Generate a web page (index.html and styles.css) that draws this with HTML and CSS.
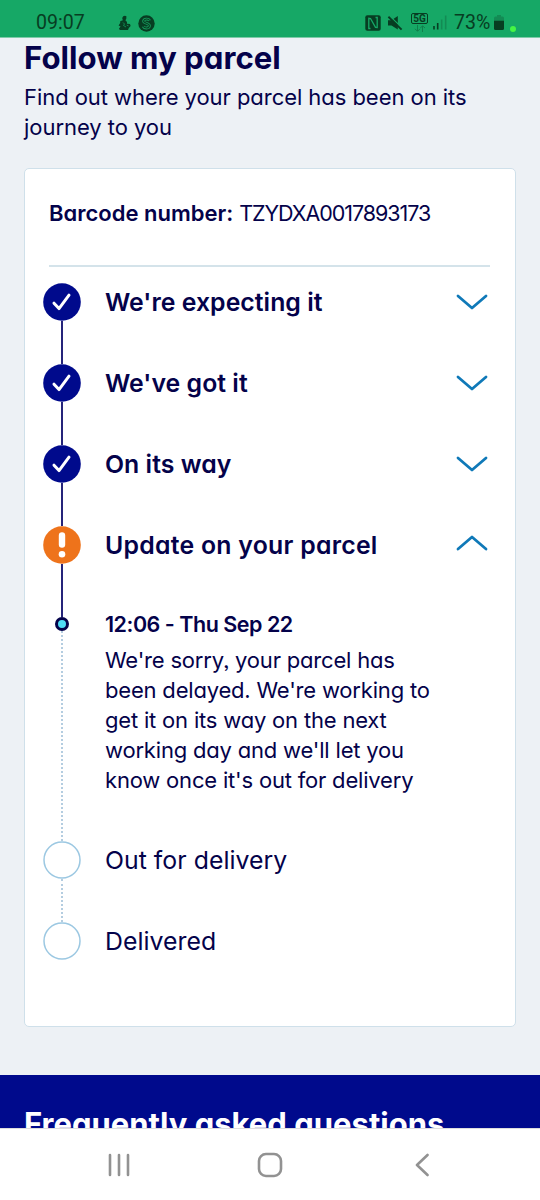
FILE: index.html
```
<!DOCTYPE html>
<html lang="en">
<head>
<meta charset="utf-8">
<title>Follow my parcel</title>
<link rel="stylesheet" href="styles.css">
</head>
<body>
<div class="phone">
  <header class="status">
    <div class="status-left">
      <span class="clock">09:07</span>
      <svg class="ico-app" width="13" height="16" viewBox="0 0 13 16"><path d="M5.2 1.2Q7 .2 8.400 1.300L8.300 3.800L7.400 5.200L9 7V8.800L12 9L12.600 11L10.800 13L10 15H1.800L1 13.400L2.600 11.500L.6 10.500L2.200 8L2.200 6.200L4.800 5.200L4.200 3Z" fill="currentColor"/><path d="M5 7.500L6.500 9L5.500 10.500L8 12M10.500 10.800L8.800 10.200" stroke="#16a866" stroke-width=".7" fill="none"/></svg>
      <svg class="ico-coin" width="17" height="17" viewBox="0 0 17 17"><circle cx="8.500" cy="8.500" r="8.200" fill="currentColor"/><path d="M11.700 5.600C10.500 3.400 6 3.500 5.600 6C5.300 8.600 11.700 8 11.400 10.900C11.100 13.700 6.300 13.600 5.200 11.300" fill="none" stroke="#169a5c" stroke-width="2.800"/><path d="M11.700 5.600C10.500 3.400 6 3.500 5.600 6C5.300 8.600 11.700 8 11.400 10.900C11.100 13.700 6.300 13.600 5.200 11.300" fill="none" stroke="currentColor" stroke-width="1.100"/></svg>
    </div>
    <div class="status-right">
      <svg class="ico-nfc" width="16" height="16" viewBox="0 0 16 16"><rect x=".3" y=".3" width="15.400" height="15.400" rx="2" fill="currentColor"/><path d="M5.500 13.500H3.800V3.300L5.500 3.500L10.500 12.300L12.200 12.500V2.500H10.500" fill="none" stroke="#16a866" stroke-width="1.300"/></svg>
      <svg class="ico-mute" width="16" height="16" viewBox="0 0 16 16"><path d="M1 5.300H4.500L10.800 1V14.500L4.500 10.500H1Z" fill="currentColor"/><path d="M2.300 .8L15.500 13.300" stroke="#16a866" stroke-width="1.300"/><path d="M1.400 1.800L14.600 14.600" stroke="currentColor" stroke-width="1.900"/></svg>
      <span class="network"><span class="five-g">5G</span>
        <svg width="12" height="7" viewBox="0 0 12 7"><path d="M3.500 0V6M1 3.800L3.500 6.300L6 3.800M8.500 7V1M6.400 3L8.500 .8L11 3" fill="none" stroke="#11804c" stroke-width="1"/></svg>
      </span>
      <svg class="ico-signal" width="14" height="15" viewBox="0 0 14 15"><path d="M1 11V14.500M4.700 8V14.500" stroke="currentColor" stroke-width="1.600"/><path d="M8.700 4.500V14.500M12.700 .5V14.500" stroke="#138b54" stroke-width="1.600"/></svg>
      <span class="percent">73%</span>
      <svg class="ico-battery" width="10" height="15" viewBox="0 0 10 15"><path d="M3 0H7V1.500H8.500Q10 1.500 10 3V6H0V3Q0 1.500 1.500 1.500H3Z" fill="#138b54"/><path d="M0 5.800H10V13.500Q10 15 8.500 15H1.500Q0 15 0 13.500Z" fill="currentColor"/></svg>
      <span class="live-dot"></span>
    </div>
  </header>

  <main class="page">
    <h1 class="title">Follow my parcel</h1>
    <p class="intro">Find out where your parcel has been on its<br>journey to you</p>

    <section class="card">
      <div class="barcode"><b class="barcode-name">Barcode number:</b><span class="barcode-value">TZYDXA0017893173</span></div>

      <div class="step">
        <div class="rail"><svg class="mark" viewBox="0 0 38 38"><circle cx="19" cy="19" r="18.800" fill="#000a8c"/><path d="M11 20.200L16 25.600L26 12.200" class="tick"/></svg><i class="line"></i></div>
        <h2 class="label">We're expecting it</h2>
        <svg class="chevron" viewBox="0 0 32 16"><path d="M2 2L16 14L30 2"/></svg>
      </div>
      <div class="step">
        <div class="rail"><svg class="mark" viewBox="0 0 38 38"><circle cx="19" cy="19" r="18.800" fill="#000a8c"/><path d="M11 20.200L16 25.600L26 12.200" class="tick"/></svg><i class="line"></i></div>
        <h2 class="label">We've got it</h2>
        <svg class="chevron" viewBox="0 0 32 16"><path d="M2 2L16 14L30 2"/></svg>
      </div>
      <div class="step">
        <div class="rail"><svg class="mark" viewBox="0 0 38 38"><circle cx="19" cy="19" r="18.800" fill="#000a8c"/><path d="M11 20.200L16 25.600L26 12.200" class="tick"/></svg><i class="line"></i></div>
        <h2 class="label">On its way</h2>
        <svg class="chevron" viewBox="0 0 32 16"><path d="M2 2L16 14L30 2"/></svg>
      </div>
      <div class="step step-open">
        <div class="rail"><svg class="mark" viewBox="0 0 38 38"><circle cx="19" cy="19" r="18.800" fill="#ee731b"/><path d="M19 9.500V18.500" stroke="#fff" stroke-width="6.400" stroke-linecap="round"/><circle cx="19" cy="28.200" r="3.300" fill="#fff"/></svg><i class="line line-short"></i><i class="dot"></i><i class="line line-dotted"></i></div>
        <div class="details">
          <h2 class="label label-open">Update on your parcel</h2>
          <h3 class="time">12:06 - Thu Sep 22</h3>
          <p class="message">We're sorry, your parcel has<br>been delayed. We're working to<br>get it on its way on the next<br>working day and we'll let you<br>know once it's out for delivery</p>
        </div>
        <svg class="chevron chevron-up" viewBox="0 0 32 16"><path d="M2 14L16 2L30 14"/></svg>
      </div>
      <div class="step">
        <div class="rail"><svg class="mark" viewBox="0 0 38 38"><circle cx="19" cy="19" r="18" class="ring"/></svg><i class="line line-dotted"></i></div>
        <h2 class="label pending">Out for delivery</h2>
      </div>
      <div class="step">
        <div class="rail"><svg class="mark" viewBox="0 0 38 38"><circle cx="19" cy="19" r="18" class="ring"/></svg></div>
        <h2 class="label pending">Delivered</h2>
      </div>
    </section>
  </main>

  <section class="faq"><h2 class="faq-title">Frequently asked questions</h2></section>

  <nav class="navbar">
    <svg width="22" height="24" viewBox="0 0 22 24"><path d="M2 2V22M11 2V22M20 2V22"/></svg>
    <svg class="home" width="26" height="26" viewBox="0 0 26 26"><rect x="2" y="2" width="22" height="22" rx="7"/></svg>
    <svg width="14" height="24" viewBox="0 0 14 24"><path d="M12.500 2L2 12L12.500 22"/></svg>
  </nav>
</div>
</body>
</html>
```
FILE: styles.css
```
* { box-sizing: border-box; margin: 0; padding: 0; }
body {
  background: #edf1f5;
  color: #04024a;
  font-family: Inter, "Liberation Sans", sans-serif;
  font-feature-settings: "cv11", "ss03";
}
.phone { width: 540px; height: 1200px; display: flex; flex-direction: column; overflow: hidden; }
svg { display: block; flex: none; }

.status {
  height: 38px; flex: none; background: #16a866; color: #073d22;
  border-bottom: 1px solid #7fcba9;
  display: flex; justify-content: space-between; padding: 0 36px 0 36px;
  font-family: Roboto, sans-serif; font-size: 19.600px; line-height: 24px;
}
.status-left, .status-right { display: flex; align-items: flex-start; padding-top: 11px; }
.clock { width: 82px; }
.ico-app { margin-top: 4px; }
.ico-coin { margin: 4px 0 0 7px; }
.status-right { position: relative; }
.ico-nfc { margin-top: 4px; }
.ico-mute { margin: 4px 0 0 6px; }
.network { margin: 2px 0 0 8px; width: 17px; display: flex; flex-direction: column; align-items: center; gap: 1px; }
.five-g { width: 17px; height: 11px; border: 1px solid; border-radius: 2px; font: 700 10px/9px Roboto, sans-serif; text-align: center; }
.ico-signal { margin: 4px 0 0 5px; }
.percent { width: 35px; margin-left: 7px; }
.ico-battery { margin: 4px 0 0 5px; }
.live-dot { position: absolute; right: -12px; top: 26px; width: 6px; height: 6px; border-radius: 50%; background: #45f545; }

.page { flex: none; height: 1037px; padding: 0 24px; }
.title { font-size: 31.200px; font-weight: 650; line-height: 40px; height: 44px; white-space: nowrap; }
.intro { font-size: 22px; line-height: 30px; letter-spacing: -.05px; height: 86px; white-space: nowrap; }
.card { height: 859px; border: 1px solid #cfe0ea; border-radius: 5px; background: #fff; padding: 0 25px 0 18px; white-space: nowrap; }
.barcode { height: 98px; margin-left: 6px; margin-bottom: 16px; padding-top: 29px; border-bottom: 2px solid #d4e3ea; line-height: 30px; display: flex; align-items: baseline; gap: 6px; }
.barcode-name { font-size: 22px; font-weight: 600; }
.barcode-value { font-size: 21.500px; letter-spacing: -1.050px; }

.step { display: flex; height: 81px; }
.step-open { height: 315px; }
.rail { width: 38px; margin-right: 24px; display: flex; flex-direction: column; align-items: center; }
.mark { width: 38px; height: 38px; }
.tick { fill: none; stroke: #fff; stroke-width: 3; stroke-linecap: round; stroke-linejoin: round; }
.ring { fill: #fff; stroke: #9cc8e2; stroke-width: 1.500; }
.line { flex: 1; width: 2px; background: #25247a; }
.line-short { flex: none; height: 53px; }
.line-dotted { width: 2px; background: none; border-left: 2px dotted #b4cde0; }
.dot { width: 14px; height: 14px; border: 3px solid #04024a; border-radius: 50%; background: #4fdcf5; flex: none; }
.label { flex: 1; font-size: 24.800px; font-weight: 600; line-height: 39px; letter-spacing: .04px; }
.label-open { letter-spacing: .27px; }
.details { flex: 1; }
.pending { font-weight: 400; }
.chevron { width: 32px; height: 16px; margin: 11px 2px 0 0; fill: none; stroke: #0f79b8; stroke-width: 2.800; stroke-linecap: round; stroke-linejoin: round; }
.chevron-up { margin-top: 9px; }
.time { font-size: 21.500px; font-weight: 600; line-height: 30px; letter-spacing: -.480px; margin-top: 44px; }
.message { font-size: 22px; line-height: 30px; letter-spacing: -.190px; margin-top: 6px; }

.faq { flex: none; height: 53px; background: #000a8c; color: #fff; padding: 28px 24px 0; overflow: hidden; }
.faq-title { font-size: 31px; font-weight: 700; line-height: 42px; white-space: nowrap; }
.navbar { flex: 1; border-top: 1px solid #ddd; background: #fff; display: flex; justify-content: space-between; align-items: center; padding: 0 111px 0 108px; fill: none; stroke: #929292; stroke-width: 2.600; stroke-linecap: round; stroke-linejoin: round; }
.home { margin-right: 5px; }
```
